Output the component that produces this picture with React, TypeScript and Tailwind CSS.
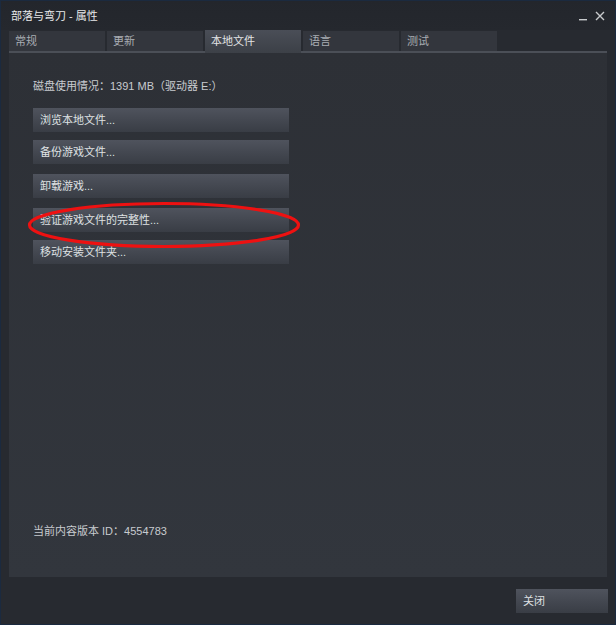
import React from 'react';

const TABS = ['常规', '更新', '本地文件', '语言', '测试'];
const ACTIVE_TAB = 2;

const ACTIONS = [
    { label: '浏览本地文件...', mt: 'mt-[14px]' },
    { label: '备份游戏文件...', mt: 'mt-[8px]' },
    { label: '卸载游戏...', mt: 'mt-[10px]' },
    { label: '验证游戏文件的完整性...', mt: 'mt-[10px]' },
    { label: '移动安装文件夹...', mt: 'mt-[8px]' },
];

const font = { fontFamily: '"Liberation Sans", "Noto Sans CJK SC", sans-serif' };

const SteamButton = (props: { label: string; className?: string }) => {
    return (
        <button
            className={`h-[24px] flex items-center pl-[7px] text-[11px] text-[#dfe1e3] bg-gradient-to-b from-[#4f535d] to-[#393d45] text-left ${props.className ?? ''}`}
        >
            {props.label}
        </button>
    );
};

const App = () => {
    return (
        <div
            className="w-[616px] h-[625px] bg-[#272a30] border border-[#1b2a3f] flex flex-col relative overflow-hidden"
            style={font}
        >
            {/* title bar */}
            <div className="h-[29px] flex items-center justify-between pl-[10px] pr-[10px] bg-gradient-to-b from-[#23262c] to-[#25282e]">
                <span className="text-[11px] text-[#e8e9eb] mt-[2px]">部落与弯刀 - 属性</span>
                <div className="flex items-center gap-[7px] mt-[1px]">
                    <svg width="9" height="10" viewBox="0 0 9 10">
                        <rect x="0" y="8" width="8" height="1.4" fill="#c8cacd" />
                    </svg>
                    <svg width="10" height="10" viewBox="0 0 10 10">
                        <path d="M1 1 L9 9 M9 1 L1 9" stroke="#c8cacd" strokeWidth="1.4" />
                    </svg>
                </div>
            </div>

            {/* tabs */}
            <div className="mx-[8px] flex items-end gap-[2px] border-b-2 border-[#4b4f57] h-[23px]">
                {TABS.map((tab, i) =>
                    i === ACTIVE_TAB ? (
                        <div
                            key={tab}
                            className="w-[96px] h-[23px] -mb-[2px] flex items-center pl-[6px] text-[11px] text-[#e2e3e5] bg-gradient-to-b from-[#4a4e57] to-[#3c4047]"
                        >
                            {tab}
                        </div>
                    ) : (
                        <div
                            key={tab}
                            className="w-[96px] h-[20px] flex items-center pl-[6px] text-[11px] text-[#a9adb3] bg-[#33363d]"
                        >
                            {tab}
                        </div>
                    )
                )}
            </div>

            {/* panel */}
            <div className="mx-[8px] w-[598px] h-[524px] bg-gradient-to-b from-[#2d3036] to-[#32363d] flex flex-col pl-[24px]">
                <p className="mt-[25px] text-[11px] text-[#c8cbcf] leading-[16px]">磁盘使用情况：1391 MB（驱动器 E:）</p>
                {ACTIONS.map((a) => (
                    <SteamButton key={a.label} label={a.label} className={`w-[256px] ${a.mt}`} />
                ))}
                <p className="mt-auto mb-[38px] text-[11px] text-[#c8cbcf] leading-[16px]">当前内容版本 ID：4554783</p>
            </div>

            {/* footer */}
            <div className="flex justify-end pr-[7px] mt-[12px]">
                <SteamButton label="关闭" className="w-[92px]" />
            </div>

            {/* annotation ellipse */}
            <svg className="absolute left-0 top-0 pointer-events-none" width="616" height="625">
                <ellipse cx="163" cy="224" rx="134.5" ry="21.5" fill="none" stroke="#ee1111" strokeWidth="3.2" />
            </svg>
        </div>
    );
};

export default App;
